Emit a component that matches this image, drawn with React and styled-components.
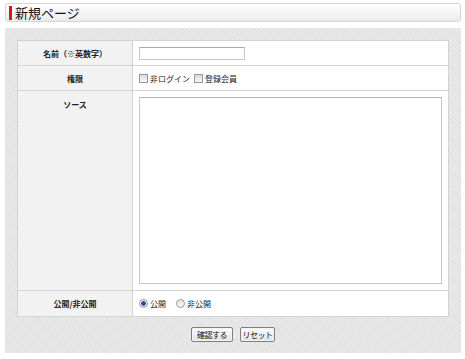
import React from 'react';
import styled, { createGlobalStyle } from 'styled-components';

const GlobalStyle = createGlobalStyle`
  body {
    margin: 0;
    background: #fff;
    font-family: "Noto Sans CJK JP", "Noto Sans", sans-serif;
    color: #222;
  }
`;

const Page = styled.div`
  width: 465px;
  height: 359px;
  overflow: hidden;
  padding-top: 3px;
  box-sizing: border-box;
`;

const TitleBar = styled.div`
  margin: 0 4px 0 5px;
  height: 17px;
  border: 1px solid #d6d6d6;
  border-radius: 3px;
  background: linear-gradient(#ffffff, #ececec);
  display: flex;
  align-items: center;
  padding-left: 3px;
  gap: 3px;
`;

const RedMark = styled.span`
  width: 3px;
  height: 14px;
  background: #e0141e;
`;

const Title = styled.h1`
  margin: 0;
  font-size: 13px;
  font-weight: normal;
  line-height: 1;
  color: #111;
`;

const Panel = styled.div`
  margin: 6px 4px 0 5px;
  padding: 12px 12px 11px 12px;
  background: repeating-linear-gradient(45deg, #e1e1e1 0 1px, #e8e8e8 1px 3px);
`;

const Table = styled.table`
  width: 432px;
  border-collapse: collapse;
  background: #fff;
  border: 1px solid #d3d3d3;
`;

const Label = styled.th`
  width: 117px;
  background: #f2f2f2;
  border: 1px solid #d3d3d3;
  font-size: 8px;
  font-weight: bold;
  text-align: center;
  vertical-align: ${p => (p.$top ? 'top' : 'middle')};
  padding: ${p => (p.$top ? '8px 0 0' : '0')};
  height: ${p => p.$h}px;
  box-sizing: border-box;
`;

const Cell = styled.td`
  border: 1px solid #d3d3d3;
  padding: 0 6px;
  font-size: 8px;
  height: ${p => p.$h}px;
  box-sizing: border-box;
`;

const TextInput = styled.input`
  display: block;
  width: 106px;
  height: 13px;
  box-sizing: border-box;
  border: 1px solid #c4c4c4;
  border-top-color: #aaa;
  margin: 0;
  padding: 0;
`;

const TextArea = styled.textarea`
  display: block;
  width: 303px;
  height: 187px;
  box-sizing: border-box;
  border: 1px solid #c8c8c8;
  border-top-color: #b0b0b0;
  resize: none;
  margin: 0;
`;

const Options = styled.div`
  display: flex;
  align-items: center;
  gap: ${p => p.$gap}px;
`;

const Option = styled.label`
  display: flex;
  align-items: center;
  gap: 2px;
  font-size: 8px;
  color: #222;
`;

const Box = styled.span`
  width: 7px;
  height: 7px;
  border: 1px solid #999;
  background: linear-gradient(#dcdcdc, #f8f8f8);
`;

const Radio = styled.span`
  width: 7px;
  height: 7px;
  border: 1px solid #9a9a9a;
  border-radius: 50%;
  background: ${p => (p.$on ? 'radial-gradient(circle, #1a4fa8 0 2px, #eaeaea 2.5px)' : 'linear-gradient(#e0e0e0, #fafafa)')};
`;

const Buttons = styled.div`
  display: flex;
  justify-content: center;
  gap: 7px;
  margin-top: 10px;
`;

const Button = styled.button`
  width: ${p => p.$w}px;
  height: 15px;
  padding: 0;
  font-family: inherit;
  font-size: 8px;
  letter-spacing: -0.5px;
  line-height: 1;
  color: #111;
  border: 1px solid #7f7f7f;
  border-radius: 2px;
  background: linear-gradient(#fdfdfd, #e2e2e2);
  box-shadow: inset 0 0 0 1px #f4f4f4;
`;

export default function App() {
  return (
    <Page>
      <GlobalStyle />
      <TitleBar>
        <RedMark />
        <Title>新規ページ</Title>
      </TitleBar>
      <Panel>
        <Table>
          <tbody>
            <tr>
              <Label $h={25}>名前（※英数字）</Label>
              <Cell $h={25}><TextInput /></Cell>
            </tr>
            <tr>
              <Label $h={25}>権限</Label>
              <Cell $h={25}>
                <Options $gap={4}>
                  <Option><Box />非ログイン</Option>
                  <Option><Box />登録会員</Option>
                </Options>
              </Cell>
            </tr>
            <tr>
              <Label $h={200} $top>ソース</Label>
              <Cell $h={200}><TextArea /></Cell>
            </tr>
            <tr>
              <Label $h={26}>公開/非公開</Label>
              <Cell $h={26}>
                <Options $gap={10}>
                  <Option><Radio $on />公開</Option>
                  <Option><Radio />非公開</Option>
                </Options>
              </Cell>
            </tr>
          </tbody>
        </Table>
        <Buttons>
          <Button $w={42}>確認する</Button>
          <Button $w={35}>リセット</Button>
        </Buttons>
      </Panel>
    </Page>
  );
}
